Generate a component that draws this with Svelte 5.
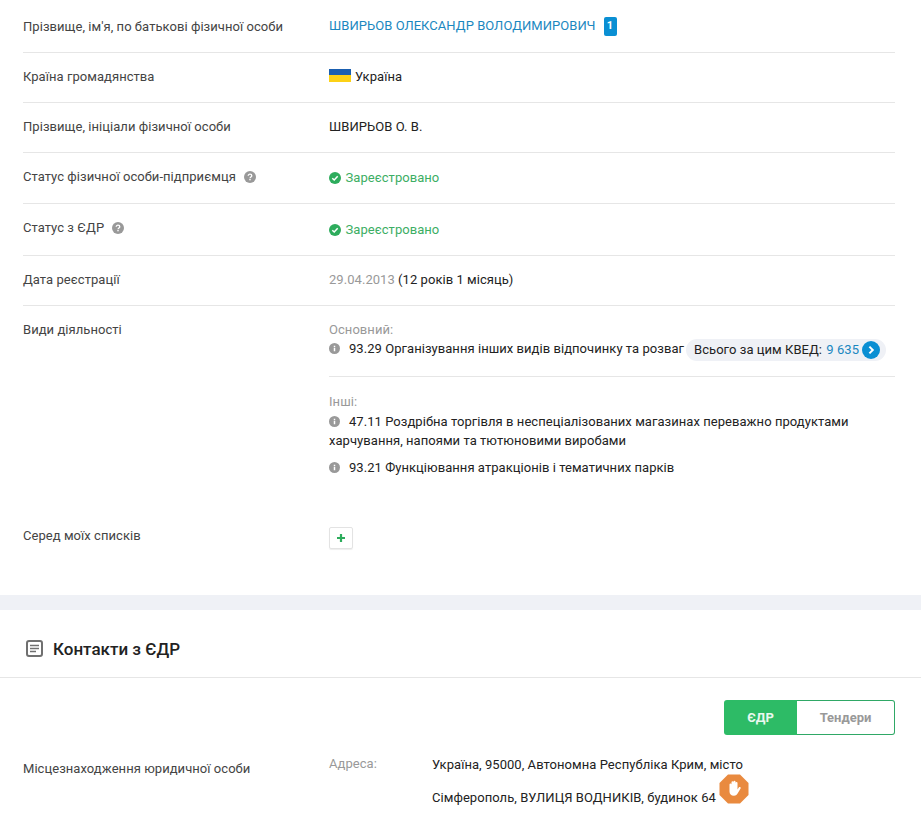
<script>
    const others = [
        "47.11 Роздрібна торгівля в неспеціалізованих магазинах переважно продуктами харчування, напоями та тютюновими виробами",
        "93.21 Функціювання атракціонів і тематичних парків"
    ];
</script>

{#snippet infoIcon()}
    <svg class="info" viewBox="0 0 12 12"><circle cx="6" cy="6" r="6" fill="#999" /><rect x="5.2" y="5.2" width="1.6" height="3.8" fill="#fff" /><rect x="5.2" y="3" width="1.6" height="1.5" fill="#fff" /></svg>
{/snippet}

{#snippet helpIcon()}
    <svg class="help" viewBox="0 0 12 12"><circle cx="6" cy="6" r="6" fill="#999" /><path d="M4.200 4.800c0-1 .8-1.600 1.800-1.600s1.800.6 1.800 1.500c0 1.300-1.800 1.300-1.800 2.600" fill="none" stroke="#fff" stroke-width="1.300" /><rect x="5.300" y="8" width="1.400" height="1.300" fill="#fff" /></svg>
{/snippet}

{#snippet okIcon()}
    <svg class="ok" viewBox="0 0 12 12"><circle cx="6" cy="6" r="6" fill="#2dac5c" /><path d="M3.300 6.200 5.200 8l3.500-3.700" fill="none" stroke="#fff" stroke-width="1.500" /></svg>
{/snippet}

<div class="page">
    <section class="info-block">
        <div class="row r1">
            <div class="label">Прізвище, ім'я, по батькові фізичної особи</div>
            <div class="value name"><span class="link">ШВИРЬОВ ОЛЕКСАНДР ВОЛОДИМИРОВИЧ</span><span class="badge">1</span></div>
        </div>
        <div class="row r2">
            <div class="label">Країна громадянства</div>
            <div class="value"><span class="flag"></span>Україна</div>
        </div>
        <div class="row r3">
            <div class="label">Прізвище, ініціали фізичної особи</div>
            <div class="value">ШВИРЬОВ О. В.</div>
        </div>
        <div class="row r4">
            <div class="label">Статус фізичної особи-підприємця {@render helpIcon()}</div>
            <div class="value status">{@render okIcon()}Зареєстровано</div>
        </div>
        <div class="row r5">
            <div class="label">Статус з ЄДР {@render helpIcon()}</div>
            <div class="value status">{@render okIcon()}Зареєстровано</div>
        </div>
        <div class="row r6">
            <div class="label">Дата реєстрації</div>
            <div class="value"><span class="muted">29.04.2013</span> (12 років 1 місяць)</div>
        </div>
        <div class="row activities">
            <div class="label">Види діяльності</div>
            <div class="value">
                <div class="muted">Основний:</div>
                <div class="main-kved">
                    <span class="kved-name">{@render infoIcon()}93.29 Організування інших видів відпочинку та розваг</span>
                    <span class="total">Всього за цим КВЕД:&nbsp;<span class="link">9 635</span>
                        <svg class="arrow" viewBox="0 0 18 18"><circle cx="9" cy="9" r="9" fill="#0a8fd3" /><path d="M7.400 5.600 10.800 9l-3.400 3.400" fill="none" stroke="#fff" stroke-width="2" /></svg>
                    </span>
                </div>
                <div class="inner-line"></div>
                <div class="muted">Інші:</div>
                {#each others as item}
                    <div class="kved">{@render infoIcon()}{item}</div>
                {/each}
            </div>
        </div>
        <div class="row lists">
            <div class="label">Серед моїх списків</div>
            <div class="value"><span class="plus"><svg viewBox="0 0 10 10"><path d="M5 1v8M1 5h8" stroke="#2dac5c" stroke-width="2.200" /></svg></span></div>
        </div>
    </section>

    <div class="divider"></div>

    <h2 class="title">
        <svg class="doc" viewBox="0 0 17 17"><rect x="1" y="1" width="15" height="15" rx="2" fill="none" stroke="#707070" stroke-width="2" /><path d="M4 5.500h9M4 8.500h9M4 11.500h6" stroke="#707070" stroke-width="1.500" /></svg>
        Контакти з ЄДР
    </h2>

    <div class="contacts">
        <div class="tabs">
            <button class="tab active">ЄДР</button>
            <button class="tab">Тендери</button>
        </div>
        <div class="address-row">
            <div class="label">Місцезнаходження юридичної особи</div>
            <div class="addr-label muted">Адреса:</div>
            <div class="addr">Україна, 95000, Автономна Республіка Крим, місто Сімферополь, ВУЛИЦЯ ВОДНИКІВ, будинок 64
                <span class="stop"><svg viewBox="0 0 30 30"><path d="M9 .5h12L29.500 9v12L21 29.500H9L.5 21V9z" fill="#e98a3f" /><path d="M10.500 15.500V10.500a1 1 0 0 1 2 0V14.500 8.300a1 1 0 0 1 2 0V14.500 7.800a1 1 0 0 1 2 0V14.500 9a1 1 0 0 1 2 0v6.500l1.300-2c.7-1 2.400-.2 1.800.9l-2.700 4.600c-.8 1.500-2 2.800-4 2.800-2.800 0-4.400-1.800-4.400-4.300z" fill="#fff" /></svg></span>
            </div>
        </div>
    </div>
</div>

<style>
    :global(body) {
        margin: 0;
        background: #fff;
    }
    .page {
        width: 921px;
        height: 831px;
        overflow: hidden;
        font-family: Roboto, "Liberation Sans", sans-serif;
        font-size: 13px;
        letter-spacing: 0.05px;
        line-height: 20px;
        color: #222;
    }
    .info-block {
        padding: 0 26px 0 23px;
    }
    .row {
        display: flex;
        align-items: center;
        border-bottom: 1px solid #e6e6e6;
    }
    .r1 { height: 52px; }
    .r2, .r3 { height: 49px; }
    .r4 { height: 50px; }
    .r5 { height: 51px; }
    .r6 { height: 49px; }
    .r1 .label { margin-top: 2px; }
    .r2 > div, .r3 > div, .r6 > div { margin-bottom: 2px; }
    .r4 .label { margin-bottom: 2px; }
    .r5 .label { margin-bottom: 4px; }
    .label {
        width: 306px;
        flex: none;
        color: #444;
    }
    .value {
        flex: 1;
        min-width: 0;
    }
    .link {
        color: #1a87c0;
    }
    .badge {
        display: inline-block;
        width: 13px;
        height: 19px;
        line-height: 18px;
        margin-left: 8px;
        background: #0a8fd3;
        border-radius: 2px;
        color: #fff;
        font-size: 11px;
        font-weight: 700;
        text-align: center;
    }
    .name {
        display: flex;
        align-items: center;
    }
    .flag {
        display: inline-block;
        width: 22px;
        height: 13px;
        margin-right: 4px;
        vertical-align: -1px;
        background: linear-gradient(#1a5fb0 50%, #fcd116 50%);
    }
    .status {
        color: #3cae64;
        display: flex;
        align-items: center;
    }
    .ok {
        width: 12px;
        height: 12px;
        margin-right: 4.5px;
    }
    .help {
        width: 12px;
        height: 12px;
        vertical-align: -2px;
        margin-left: 5px;
    }
    .info {
        width: 11px;
        height: 11px;
        vertical-align: -1px;
        margin-right: 9px;
    }
    .muted {
        color: #999;
    }
    .activities {
        align-items: flex-start;
        height: 210px;
        border-bottom: 0;
        padding-top: 14px;
        box-sizing: border-box;
    }
    .main-kved {
        display: flex;
        align-items: center;
        white-space: nowrap;
        margin-top: -1px;
    }
    .kved-name {
        margin-bottom: 2px;
    }
    .total {
        display: inline-flex;
        align-items: center;
        height: 22px;
        margin-left: 2px;
        padding: 0 6px 0 8px;
        background: #eff1f6;
        border-radius: 11px;
    }
    .total .link {
        margin-left: 1px;
    }
    .arrow {
        width: 18px;
        height: 18px;
        margin-left: 3px;
    }
    .inner-line {
        height: 1px;
        background: #e6e6e6;
        margin: 15px 0;
    }
    .kved {
        line-height: 19px;
        padding: 0 0 8px;
    }
    .lists {
        border-bottom: 0;
        height: 44px;
    }
    .lists .label {
        margin-bottom: 4px;
    }
    .plus {
        display: flex;
        align-items: center;
        justify-content: center;
        width: 22px;
        height: 20px;
        border: 1px solid #e3e3e3;
        border-radius: 2px;
        box-shadow: 0 1px 1px #eee;
    }
    .plus svg {
        width: 10px;
        height: 10px;
    }
    .divider {
        height: 15px;
        margin-top: 35px;
        background: #eff1f6;
    }
    .title {
        display: flex;
        align-items: center;
        gap: 10px;
        box-sizing: border-box;
        height: 68px;
        margin: 0;
        padding: 10px 0 0 26px;
        border-bottom: 1px solid #e6e6e6;
        font-size: 17px;
        font-weight: 500;
        letter-spacing: 0;
    }
    .doc {
        width: 17px;
        height: 17px;
    }
    .contacts {
        padding: 22px 26px 0 23px;
    }
    .tabs {
        display: flex;
        justify-content: flex-end;
    }
    .tab {
        width: 98px;
        height: 35px;
        padding: 0;
        border: 1px solid #2fa866;
        border-left: 0;
        border-radius: 0 3px 3px 0;
        background: #fff;
        color: #999;
        font: 700 13px Roboto, sans-serif;
    }
    .tab.active {
        width: 73px;
        border: 0;
        border-radius: 3px 0 0 3px;
        background: #2dbb66;
        color: #eaf8ef;
    }
    .address-row {
        display: flex;
        align-items: flex-start;
        margin-top: 19px;
    }
    .address-row .label {
        margin-top: 5px;
    }
    .addr-label {
        width: 103px;
        flex: none;
    }
    .addr {
        width: 330px;
        line-height: 33px;
        margin-top: -6px;
    }
    .stop {
        display: inline-block;
        position: relative;
        width: 30px;
        height: 0;
    }
    .stop svg {
        position: absolute;
        left: 0;
        top: -28px;
        width: 30px;
        height: 30px;
    }
</style>
